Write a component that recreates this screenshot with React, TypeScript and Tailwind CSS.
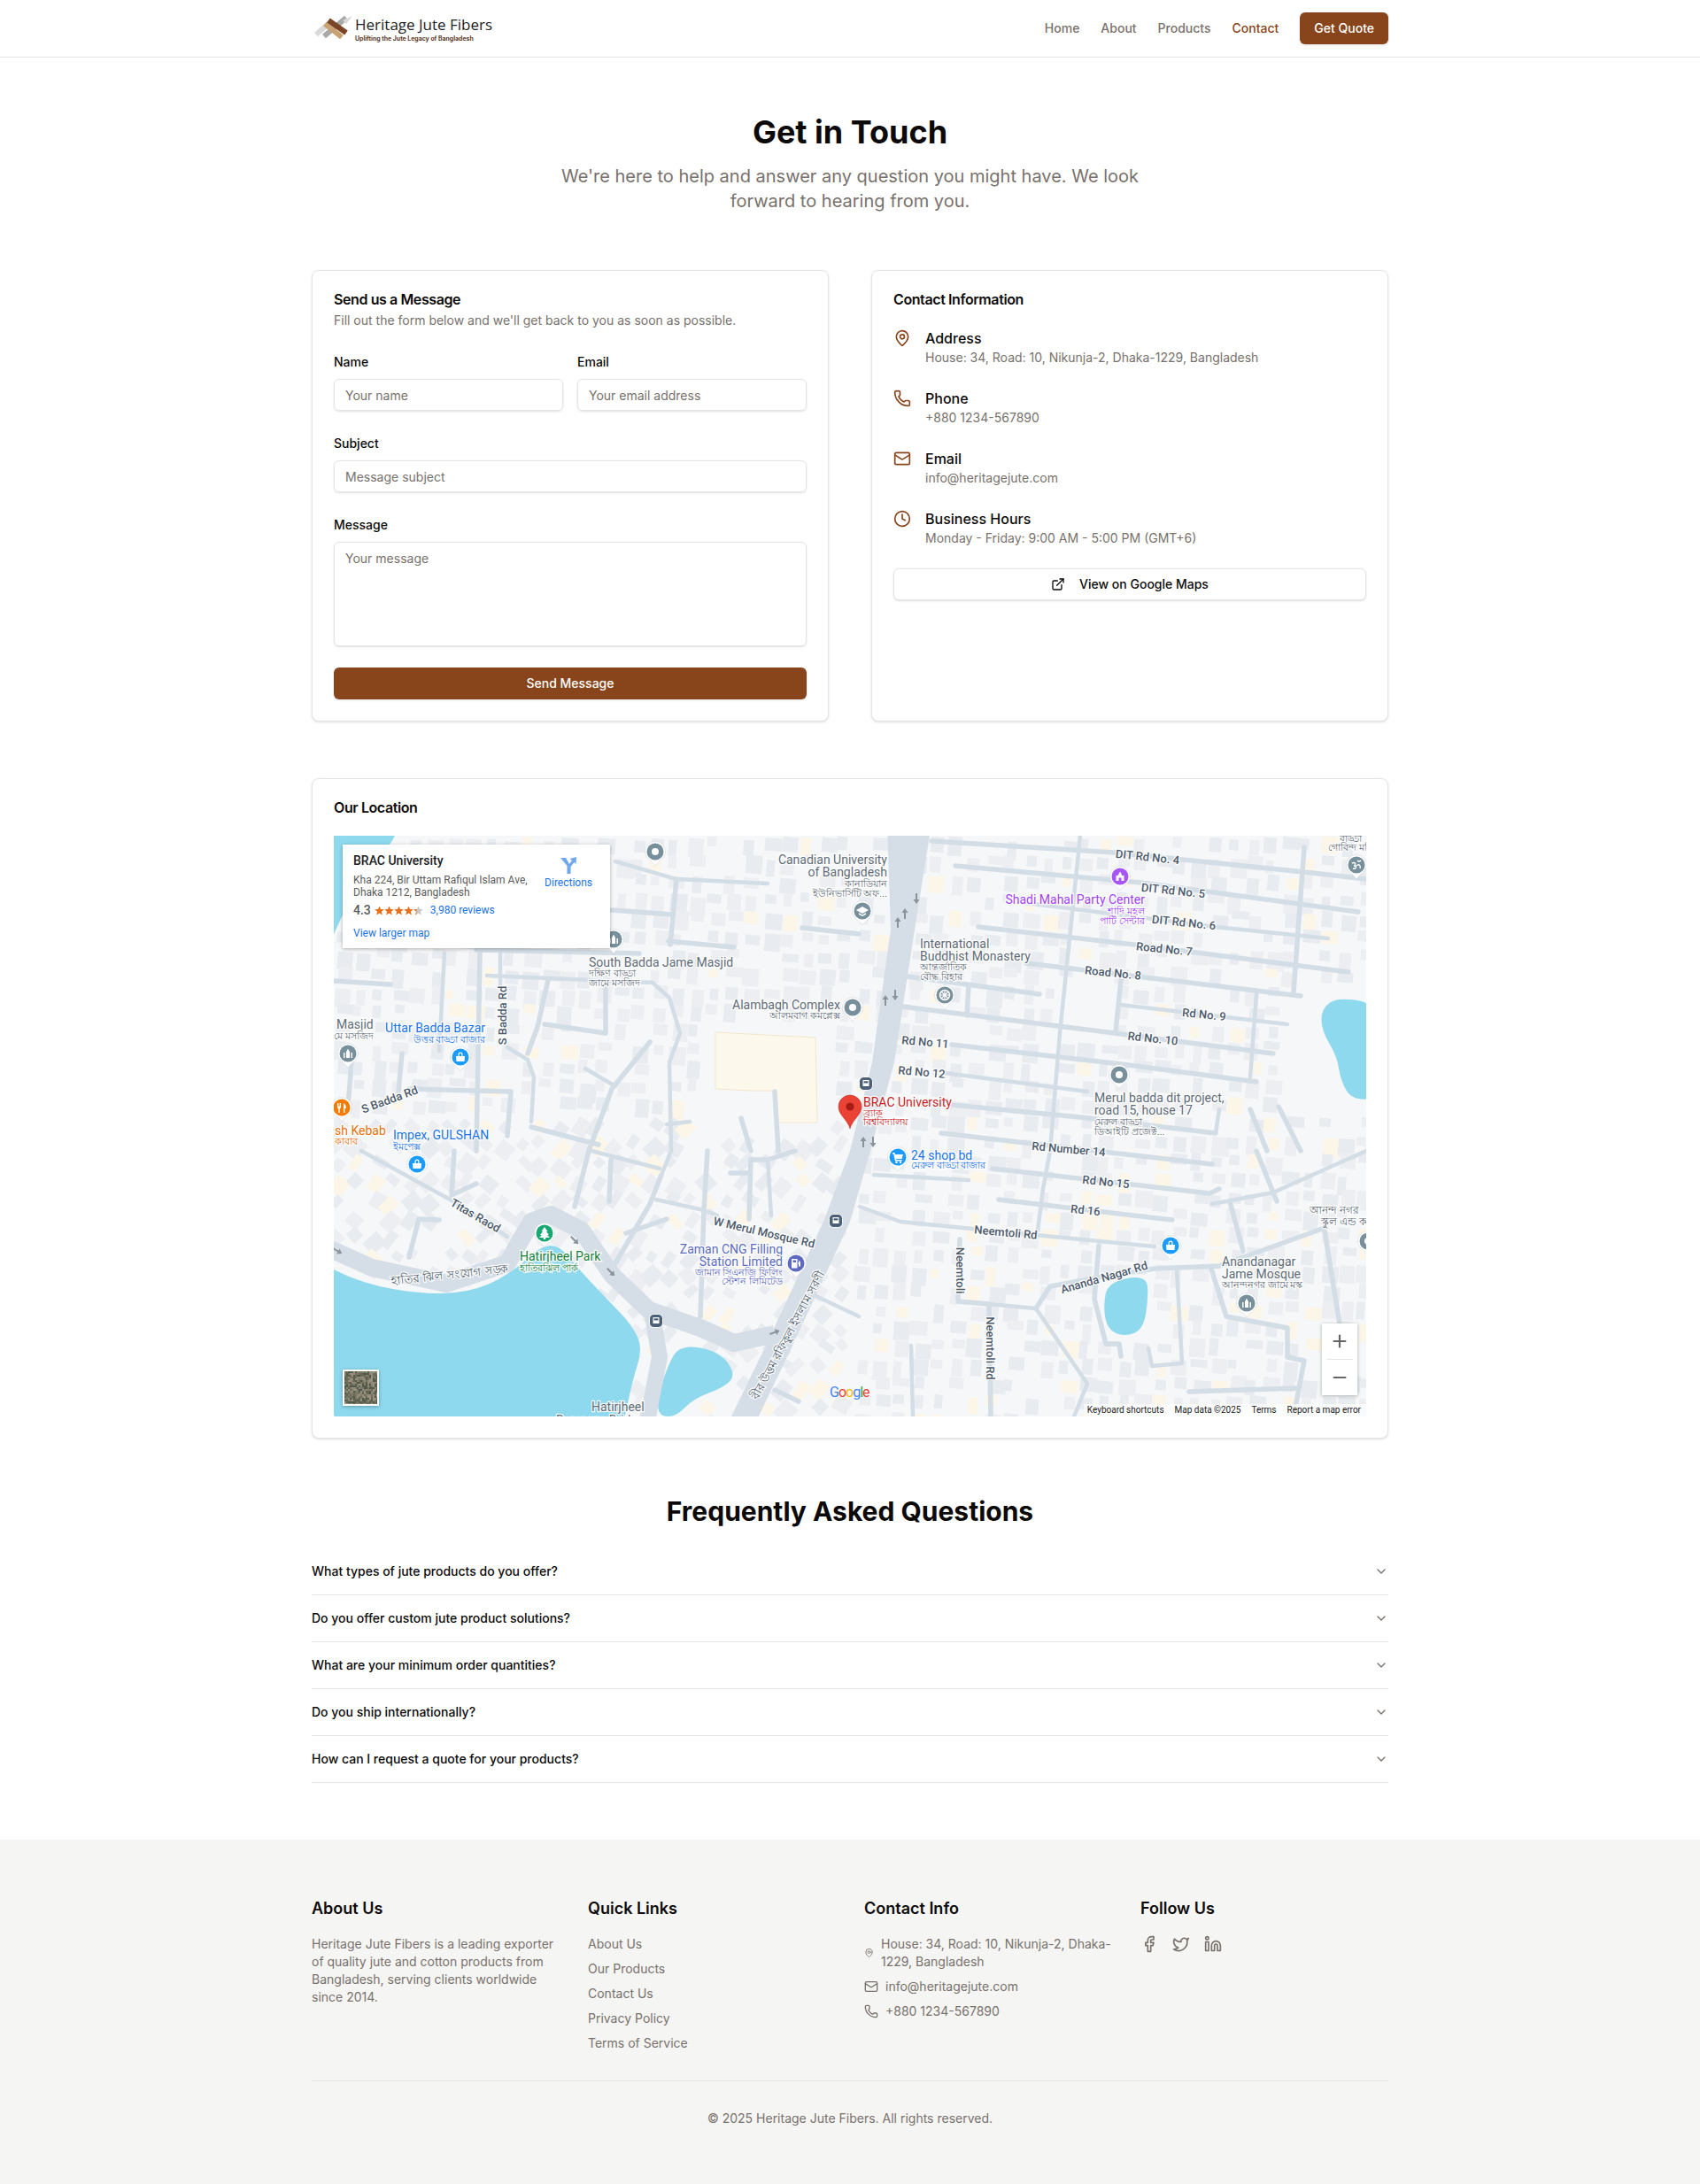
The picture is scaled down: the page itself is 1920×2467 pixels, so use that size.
import { ChevronDown, Clock, ExternalLink, Facebook, Linkedin, Mail, MapPin, Minus, Phone, Plus, Twitter } from 'lucide-react';

const navLinks = ['Home', 'About', 'Products'];
const faqs = [
    'What types of jute products do you offer?',
    'Do you offer custom jute product solutions?',
    'What are your minimum order quantities?',
    'Do you ship internationally?',
    'How can I request a quote for your products?',
];
const quickLinks = ['About Us', 'Our Products', 'Contact Us', 'Privacy Policy', 'Terms of Service'];
const contactRows = [
    { icon: MapPin, title: 'Address', text: 'House: 34, Road: 10, Nikunja-2, Dhaka-1229, Bangladesh' },
    { icon: Phone, title: 'Phone', text: '+880 1234-567890' },
    { icon: Mail, title: 'Email', text: 'info@heritagejute.com' },
    { icon: Clock, title: 'Business Hours', text: 'Monday - Friday: 9:00 AM - 5:00 PM (GMT+6)' },
];

// map drawing uses page pixel coordinates, see the viewBox on the svg
const lakes = [
    [[350, 1420], [408, 1450], [485, 1463], [542, 1457], [584, 1433], [607, 1410], [630, 1405], [653, 1433], [688, 1470], [714, 1497], [726, 1523], [714, 1560], [700, 1630], [350, 1640]],
    [[768, 1518], [814, 1527], [831, 1553], [818, 1567], [783, 1580], [764, 1600], [745, 1600], [742, 1583], [753, 1545]],
    [[1251, 1448], [1295, 1440], [1297, 1467], [1291, 1502], [1270, 1510], [1251, 1502], [1246, 1477]],
    [[1511, 1126], [1560, 1135], [1560, 1240], [1527, 1243], [1514, 1220], [1510, 1193], [1493, 1165], [1492, 1140]],
    [[350, 920], [470, 920], [400, 1000], [350, 1120]],
];
const emptyAreas = [
    [1204, 1108, 1258, 1166],
    [1460, 1125, 1543, 1260],
    [800, 1160, 930, 1270],
];

const smoothPath = (poly: number[][]) => {
    const mid = (a: number[], b: number[]) => `${(a[0] + b[0]) / 2} ${(a[1] + b[1]) / 2}`;
    let d = `M${mid(poly[poly.length - 1], poly[0])}`;
    poly.forEach((p, i) => {
        d += ` Q${p[0]} ${p[1]} ${mid(p, poly[(i + 1) % poly.length])}`;
    });
    return d + ' Z';
};

const inLake = (x: number, y: number) =>
    lakes.some((poly) => {
        let hit = false;
        for (let i = 0, j = poly.length - 1; i < poly.length; j = i++) {
            const [xi, yi] = poly[i];
            const [xj, yj] = poly[j];
            if (yi > y !== yj > y && x < ((xj - xi) * (y - yi)) / (yj - yi) + xi) hit = !hit;
        }
        return hit;
    });

function makeBuildings() {
    let seed = 4711;
    const rnd = () => {
        seed = (seed * 16807) % 2147483647;
        return seed / 2147483647;
    };
    const out: { x: number; y: number; w: number; h: number; fill: string; rot: number }[] = [];
    for (let y = 944; y < 1600; y += 21) {
        for (let x = 377; x < 1543; x += 21) {
            const r = rnd();
            const px = x + rnd() * 7;
            const py = y + rnd() * 7;
            const w = 9 + rnd() * 11;
            const h = 9 + rnd() * 13;
            if (r < 0.2 || inLake(px + w / 2, py + h / 2) || inLake(px, py) || inLake(px + w, py + h)) continue;
            if (emptyAreas.some(([a, b, c, d]) => px + w > a && px < c && py + h > b && py < d)) continue;
            const west = x < 960;
            const beige = r > 0.9;
            out.push({
                x: px,
                y: py,
                w,
                h,
                fill: beige ? '#fbf6e8' : r > 0.55 ? '#e8ebf0' : '#eceef2',
                rot: west && y > 1250 ? 30 + rnd() * 20 : 5,
            });
        }
    }
    return out;
}
const buildings = makeBuildings();

const mainRoad = '1002,930 1052,930 1033,1050 1010,1200 983,1300 960,1380 895,1520 852,1610 821,1610 865,1520 930,1380 960,1300 985,1200 1006,1050';
const wideRoads = [
    { d: 'M360 1405 L420 1432 L504 1450 L573 1427 L600 1380 L622 1372 L657 1390 L691 1440 L733 1480 L791 1500 L829 1517 L875 1507', w: 20 },
    { d: 'M737 1487 L745 1533 L730 1610', w: 18 },
];
const streets = [
    'M1052 950 L1258 963 L1473 985 L1543 993', 'M1079 978 L1289 997 L1534 1030', 'M1159 1020 L1373 1047 L1500 1060',
    'M1105 1047 L1281 1067 L1523 1098', 'M1159 1088 L1469 1125', 'M1266 1135 L1454 1157', 'M1019 1137 L1259 1167 L1438 1190',
    'M1075 1180 L1266 1202 L1419 1222', 'M1067 1212 L1228 1233', 'M1075 1248 L1220 1262 L1373 1280', 'M1063 1280 L1369 1315',
    'M1220 944 L1197 1167 L1186 1300 L1178 1343 L1172 1390', 'M1266 1107 L1260 1165', 'M1473 957 L1461 1120', 'M1419 1123 L1412 1217',
    'M1094 1113 L1092 1147', 'M1025 1103 L1174 1123', 'M987 1327 L1094 1333', 'M1121 1320 L1366 1348 L1377 1343', 'M1128 1355 L1324 1378',
    'M971 1363 L1017 1380 L1098 1388 L1304 1408', 'M1170 1478 L1186 1453 L1258 1440 L1304 1433 L1377 1430 L1496 1387',
    'M1084 1400 L1082 1470 L1117 1473 L1119 1600', 'M1117 1473 L1170 1478 L1228 1563 L1213 1600', 'M1389 1357 L1404 1413',
    'M1368 1433 L1385 1487 L1454 1500 L1454 1533 L1473 1537 L1461 1600', 'M1329 1433 L1335 1540 L1301 1543 L1297 1523',
    'M1241 1407 L1236 1467 L1249 1518 L1264 1518 L1266 1532', 'M1343 1572 L1465 1568', 'M1029 1520 L1031 1600',
    'M1496 1390 L1511 1483 L1515 1507', 'M1419 1300 L1442 1357', 'M1369 1360 L1438 1347 L1543 1300', 'M1444 1250 L1469 1300', 'M1412 1253 L1431 1300',
    'M1377 1253 L1373 1280', 'M377 1108 L441 1112', 'M538 1073 L722 1077', 'M550 1102 L737 1110 L756 1127 L768 1167 L756 1200 L758 1300 L747 1327',
    'M764 993 L757 1067', 'M755 1063 L829 1070', 'M695 973 L764 993 L867 998', 'M691 1028 L760 1033', 'M906 1048 L970 1055',
    'M502 1077 L496 1187', 'M542 1077 L538 1300', 'M454 1190 L450 1233', 'M565 1077 L565 1113', 'M397 1200 L393 1250', 'M462 1230 L577 1233 L573 1283',
    'M573 1183 L596 1197 L603 1217 L600 1267', 'M619 1107 L607 1160 L596 1190', 'M615 1157 L684 1167 L684 1117', 'M661 1207 L695 1227',
    'M734 1177 L691 1230 L665 1300 L649 1363', 'M600 1273 L676 1293', 'M753 1270 L779 1267', 'M875 1233 L879 1300', 'M837 1263 L848 1300',
    'M408 1300 L512 1357 L573 1397', 'M462 1420 L473 1377 L496 1378', 'M513 1300 L510 1350 L538 1337', 'M668 1300 L745 1320', 'M690 1310 L688 1357',
    'M747 1327 L734 1360 L695 1427', 'M741 1355 L795 1367 L810 1373', 'M799 1300 L795 1367 L791 1487', 'M848 1310 L846 1377', 'M867 1310 L871 1373',
    'M898 1300 L867 1310 L848 1310', 'M825 1325 L845 1325', 'M913 1460 L970 1487', 'M875 1570 L902 1583', 'M753 1377 L707 1393',
];

type TextRow = [string, number, number, 'start' | 'end' | 'middle'?, number?];
const labelGroups: { color: string; rows: TextRow[] }[] = [
    {
        color: '#5f6b76',
        rows: [
            ['Canadian University', 1002, 971, 'end'],
            ['of Bangladesh', 1002, 985, 'end'],
            ['কানাডিয়ান', 1002, 998, 'end', 11],
            ['ইউনিভার্সিটি অফ...', 1002, 1009, 'end', 11],
            ['South Badda Jame Masjid', 665, 1087],
            ['দক্ষিণ বাড্ডা', 665, 1099, 'start', 11],
            ['জামে মসজিদ', 665, 1110, 'start', 11],
            ['Alambagh Complex', 949, 1135, 'end'],
            ['আলমবাগ কমপ্লেক্স', 949, 1147, 'end', 11],
            ['International', 1039, 1066],
            ['Buddhist Monastery', 1039, 1080],
            ['আন্তর্জাতিক', 1039, 1092, 'start', 11],
            ['বৌদ্ধ বিহার', 1039, 1103, 'start', 11],
            ['Merul badda dit project,', 1236, 1240],
            ['road 15, house 17', 1236, 1254],
            ['মেরুল বাড্ডা', 1236, 1267, 'start', 11],
            ['ডিআইটি প্রজেক্ট...', 1236, 1278, 'start', 11],
            ['Masjid', 380, 1157],
            ['মে মসজিদ', 377, 1170, 'start', 11],
            ['Anandanagar', 1380, 1425],
            ['Jame Mosque', 1380, 1439],
            ['আনন্দনগর জামে মস্ক', 1380, 1451, 'start', 11],
            ['Hatirjheel', 668, 1589],
            ['Rampura Bridge', 628, 1604],
            ['আনন্দ নগর', 1479, 1367, 'start', 12],
            ['স্কুল এন্ড কলেজ', 1492, 1380, 'start', 12],
            ['বাড্ডা', 1513, 947, 'start', 11],
            ['গোবিন্দ মন্দির', 1500, 957, 'start', 11],
        ],
    },
    {
        color: '#1a73e8',
        rows: [
            ['Uttar Badda Bazar', 548, 1161, 'end'],
            ['উত্তর বাড্ডা বাজার', 548, 1174, 'end', 11],
            ['Impex, GULSHAN', 444, 1282],
            ['ইমপেক্স', 444, 1295, 'start', 11],
            ['24 shop bd', 1029, 1305],
            ['মেরুল বাড্ডা বাজার', 1029, 1316, 'start', 11],
        ],
    },
    { color: '#e8710a', rows: [['sh Kebab', 378, 1277], ['কাবাব', 378, 1289, 'start', 11]] },
    { color: '#188038', rows: [['Hatirjheel Park', 587, 1419], ['হাতিরঝিল পার্ক', 587, 1432, 'start', 11]] },
    {
        color: '#a142f4',
        rows: [
            ['Shadi Mahal Party Center', 1293, 1016, 'end'],
            ['শাদি মহল', 1293, 1029, 'end', 11],
            ['পার্টি সেন্টার', 1293, 1040, 'end', 11],
        ],
    },
    {
        color: '#5c6bc0',
        rows: [
            ['Zaman CNG Filling', 884, 1411, 'end'],
            ['Station Limited', 884, 1425, 'end'],
            ['জামান সিএনজি ফিলিং', 884, 1437, 'end', 11],
            ['স্টেশন লিমিটেড', 884, 1447, 'end', 11],
        ],
    },
    { color: '#c5221f', rows: [['BRAC University', 975, 1245], ['ব্র্যাক', 975, 1257, 'start', 11], ['বিশ্ববিদ্যালয়', 975, 1267, 'start', 11]] },
];

const roadLabels: [string, number, number, number][] = [
    ['DIT Rd No. 4', 1296, 968, 6], ['DIT Rd No. 5', 1325, 1006, 6], ['DIT Rd No. 6', 1337, 1042, 6], ['Road No. 7', 1315, 1072, 6],
    ['Road No. 8', 1257, 1099, 6], ['Rd No. 9', 1360, 1146, 6], ['Rd No. 10', 1302, 1173, 6], ['Rd No 11', 1045, 1177, 5],
    ['Rd No 12', 1041, 1211, 5], ['Rd Number 14', 1207, 1298, 5], ['Rd No 15', 1249, 1335, 6], ['Rd 16', 1226, 1367, 6],
    ['Neemtoli Rd', 1136, 1392, 5], ['Neemtoli', 1084, 1435, 90], ['Neemtoli Rd', 1118, 1523, 90], ['Ananda Nagar Rd', 1247, 1443, -16],
    ['W Merul Mosque Rd', 863, 1392, 13], ['Titas Raod', 537, 1373, 30], ['S Badda Rd', 440, 1242, -20], ['S Badda Rd', 567, 1147, -90],
    ['হাতির ঝিল সংযোগ সড়ক', 508, 1440, -6], ['বীর উত্তম রফিকুল ইসলাম সরণী', 890, 1508, -62],
];

const arrows: [number, number, number][] = [
    [1035, 1015, 180], [1022, 1032, 0], [1014, 1042, 0], [1000, 1130, 0], [1011, 1124, 180], [975, 1290, 0], [986, 1290, 180],
    [649, 1401, 135], [690, 1437, 135], [381, 1413, 120], [875, 1505, 70],
];

const PIN_BLUE = '#1a9bfd';
const PIN_GREY = '#78909c';
type Glyph = 'dot' | 'mosque' | 'shop' | 'cap' | 'wheel' | 'home' | 'om' | 'food' | 'tree' | 'gas' | 'cart';
const pins: [number, number, string, Glyph][] = [
    [740, 962, PIN_GREY, 'dot'], [963, 1138, PIN_GREY, 'dot'], [974, 1029, PIN_GREY, 'cap'], [1067, 1124, PIN_GREY, 'wheel'],
    [1265, 990, '#a855f7', 'home'], [1532, 977, PIN_GREY, 'om'], [1264, 1214, PIN_GREY, 'dot'], [693, 1061, PIN_GREY, 'mosque'],
    [393, 1190, PIN_GREY, 'mosque'], [520, 1194, PIN_BLUE, 'shop'], [386, 1251, '#f57c00', 'food'], [471, 1315, PIN_BLUE, 'shop'],
    [615, 1393, '#16a870', 'tree'], [899, 1427, '#5c6bc0', 'gas'], [1014, 1307, PIN_BLUE, 'cart'], [1322, 1407, PIN_BLUE, 'shop'],
    [1408, 1472, PIN_GREY, 'mosque'], [1545, 1402, PIN_GREY, 'dot'],
];
const transit: [number, number][] = [[978, 1224], [944, 1379], [741, 1492]];

function PinGlyph({ kind }: { kind: Glyph }) {
    switch (kind) {
        case 'dot':
            return <circle r="4" fill="#fff" />;
        case 'mosque':
            return <path d="M-5 5 V-1 H-3.5 V5 Z M-2 5 V-1.5 A2 2 0 0 1 2 -1.5 V5 Z M3.5 5 V-1 H5 V5 Z M-1 -4.5 H1 V-3 H-1 Z" fill="#fff" />;
        case 'shop':
            return <path d="M-5 -1 H5 L4.5 5 H-4.5 Z M-2.5 -1 V-3 A2.5 2.5 0 0 1 2.5 -3 V-1 H1.3 V-3 A1.3 1.3 0 0 0 -1.3 -3 V-1 Z" fill="#fff" />;
        case 'cap':
            return <path d="M0 -5 L7 -1 L0 3 L-7 -1 Z M-4 2 L0 4.5 L4 2 V4 L0 6 L-4 4 Z" fill="#fff" />;
        case 'wheel':
            return (
                <g fill="none" stroke="#fff">
                    <circle r="5.5" strokeWidth="1.5" />
                    <path d="M0 -6 V6 M-6 0 H6 M-4 -4 L4 4 M-4 4 L4 -4" strokeWidth="1.2" />
                </g>
            );
        case 'home':
            return <path d="M-4.5 5 V-1 L-2.5 -1 L0 -5.5 L2.5 -1 L4.5 -1 V5 H1.5 V1.5 H-1.5 V5 Z" fill="#fff" />;
        case 'om':
            return <path d="M-5 -2 C-1 -4 0 0 -3 1 C1 1 0 5 -4 4 M0 1 C3 -2 5 1 4 4 M1 -5 C3 -3 4 -4 5 -5" fill="none" stroke="#fff" strokeWidth="1.4" />;
        case 'food':
            return <path d="M-5 -5 V-1 Q-5 1 -3.7 1.5 V6 H-2.3 V1.5 Q-1 1 -1 -1 V-5 H-2 V-1.5 H-2.6 V-5 H-3.4 V-1.5 H-4 V-5 Z M2 -5 Q5 -3 5 1 H3.4 V6 H2 Z" fill="#fff" />;
        case 'tree':
            return <path d="M0 -7 L3.5 -2 H2 L5 2 H3 L6 5 H1.2 V7 H-1.2 V5 H-6 L-3 2 H-5 L-2 -2 H-3.5 Z" fill="#fff" />;
        case 'gas':
            return <path d="M-5 -5 H1.5 V5.5 H-5 Z M-3.5 -3.5 V-1 H0 V-3.5 Z M2.5 -4 L5 -1.5 V3.5 H3 V1 H2.5 V-1 H3.5 Z" fill="#fff" fillRule="evenodd" />;
        case 'cart':
            return <path d="M-6 -5 H-3.5 L-3 -3 H6 L4.5 2 H-2 L-1.6 3 H4.5 V4.4 H-3 L-4.8 -3.6 H-6 Z M-1.5 4.8 A1.2 1.2 0 1 0 -1.49 4.8 Z M3 4.8 A1.2 1.2 0 1 0 3.01 4.8 Z" fill="#fff" />;
    }
}

function MapDrawing() {
    return (
        <svg viewBox="377 944 1166 656" className="block h-full w-full [font-family:Roboto,sans-serif]">
            <rect x="377" y="944" width="1166" height="656" fill="#f6f7f8" />
            {buildings.map((b, i) => (
                <rect key={i} x={b.x} y={b.y} width={b.w} height={b.h} fill={b.fill} transform={`rotate(${b.rot} ${b.x} ${b.y})`} />
            ))}
            <path d="M808 1166 L921 1172 L923 1268 L878 1268 L877 1232 L848 1232 L808 1230 Z" fill="#fdf8ec" stroke="#f3e6cf" />
            {streets.map((d, i) => (
                <path key={i} d={d} fill="none" stroke="#d3dde6" strokeWidth={i % 3 === 2 ? 4.5 : 5.5} strokeLinecap="round" strokeLinejoin="round" />
            ))}
            {lakes.map((poly, i) => (
                <path key={i} d={smoothPath(poly)} fill="#8ed9ee" />
            ))}
            <polygon points={mainRoad} fill="#d5dee6" />
            {wideRoads.map((r, i) => (
                <path key={i} d={r.d} fill="none" stroke="#d5dee6" strokeWidth={r.w} strokeLinejoin="round" />
            ))}
            {arrows.map(([x, y, rot], i) => (
                <path key={i} d="M0 -6 L3.5 -1 H1 V6 H-1 V-1 H-3.5 Z" fill="#8a939b" transform={`translate(${x} ${y}) rotate(${rot})`} />
            ))}
            <g stroke="#fff" strokeOpacity="0.9" strokeWidth="2.5" style={{ paintOrder: 'stroke' }} dominantBaseline="central">
                {labelGroups.map((group) =>
                    group.rows.map(([text, x, y, anchor, size], i) => (
                        <text key={`${text}${i}`} x={x} y={y} fill={group.color} fontSize={size ?? 14} textAnchor={anchor ?? 'start'}>
                            {text}
                        </text>
                    )),
                )}
                {roadLabels.map(([text, x, y, rot], i) => (
                    <text key={i} x={x} y={y} fill="#4d5a6b" fontSize="13" fontWeight="500" textAnchor="middle" transform={`rotate(${rot} ${x} ${y})`}>
                        {text}
                    </text>
                ))}
            </g>
            {pins.map(([x, y, color, kind], i) => (
                <g key={i} transform={`translate(${x} ${y})`}>
                    <path d="M-11.5 0 A11.5 11.5 0 1 1 11.5 0 C11.5 7 4 10 0 16 C-4 10 -11.5 7 -11.5 0 Z" fill="#fff" stroke="#c9ced4" strokeWidth="0.5" />
                    <circle r="9.5" fill={color} />
                    <PinGlyph kind={kind} />
                </g>
            ))}
            {transit.map(([x, y], i) => (
                <g key={i} transform={`translate(${x} ${y})`}>
                    <rect x="-7.5" y="-7.5" width="15" height="15" rx="5" fill="#4b6076" stroke="#fff" />
                    <path d="M-3.5 -4 H3.5 V3 H-3.5 Z M-2.4 -2.8 V-0.4 H2.4 V-2.8 Z" fill="#fff" fillRule="evenodd" />
                </g>
            ))}
            <g transform="translate(960 1250)">
                <path d="M-13 0 A13 13 0 1 1 13 0 C13 10 3 14 0 25 C-3 14 -13 10 -13 0 Z" fill="#ea4335" stroke="#c5221f" strokeWidth="0.5" />
                <circle r="4.6" fill="#a51c15" />
            </g>
        </svg>
    );
}

const satTiles = (() => {
    let seed = 99;
    const colors = ['#75735f', '#6a6a58', '#8f8b78', '#5a5d4c', '#807c68', '#4f5a4a', '#9a927e'];
    const out: { x: number; y: number; fill: string }[] = [];
    for (let y = 0; y < 37; y += 2) {
        for (let x = 0; x < 37; x += 2) {
            seed = (seed * 16807) % 2147483647;
            out.push({ x, y, fill: colors[seed % colors.length] });
        }
    }
    return out;
})();

function SatelliteThumb() {
    return (
        <svg viewBox="0 0 37 37" className="block h-full w-full">
            {satTiles.map((t, i) => (
                <rect key={i} x={t.x} y={t.y} width="2" height="2" fill={t.fill} />
            ))}
        </svg>
    );
}

function Stars() {
    const star = 'M5.5 0.5 L7 4 L10.8 4.3 L7.9 6.8 L8.8 10.5 L5.5 8.5 L2.2 10.5 L3.1 6.8 L0.2 4.3 L4 4 Z';
    return (
        <svg width="55" height="11" viewBox="0 0 55 11">
            <defs>
                <clipPath id="half-star">
                    <rect x="44" y="0" width="3.5" height="11" />
                </clipPath>
            </defs>
            {[0, 11, 22, 33].map((x) => (
                <path key={x} d={star} transform={`translate(${x} 0)`} fill="#e7711b" />
            ))}
            <path d={star} transform="translate(44 0)" fill="#c8c8c8" />
            <g clipPath="url(#half-star)">
                <path d={star} transform="translate(44 0)" fill="#e7711b" />
            </g>
        </svg>
    );
}

function MapSection() {
    return (
        <div className="relative h-[656px] overflow-hidden [font-family:Roboto,sans-serif]">
            <MapDrawing />
            {/* place card */}
            <div className="absolute left-[10px] top-[10px] flex h-[117px] w-[302px] justify-between bg-white pl-3 pr-5 pt-[9px] shadow-[0_1px_4px_rgba(0,0,0,0.3)]">
                <div>
                    <div className="text-[14px] font-medium leading-[18px] text-[#202124]">BRAC University</div>
                    <div className="mt-[6px] w-[205px] text-[12px] leading-[14px] text-[#5b5b5b]">
                        Kha 224, Bir Uttam Rafiqul Islam Ave, Dhaka 1212, Bangladesh
                    </div>
                    <div className="mt-1 flex h-[18px] items-center text-[12px]">
                        <span className="mr-1 text-[14px] font-medium text-[#5b5b5b]">4.3</span>
                        <Stars />
                        <span className="ml-2 text-[#1a73e8]">3,980 reviews</span>
                    </div>
                    <div className="mt-[10px] text-[12px] leading-[14px] text-[#1a73e8]">View larger map</div>
                </div>
                <div className="flex flex-col items-center pt-1">
                    <svg width="20" height="20" viewBox="0 0 20 20">
                        <path d="M1 2 L7 2 L11 9 L14 5 L11.5 3 L19 1 L18.5 9 L16.5 7 L12.5 12 V20 H8.5 V11 Z" fill="#6fa8ec" />
                    </svg>
                    <span className="mt-[3px] text-[12px] leading-[14px] text-[#1a73e8]">Directions</span>
                </div>
            </div>
            {/* satellite toggle */}
            <div className="absolute bottom-[12px] left-[10px] h-[41px] w-[41px] border-2 border-white shadow-[0_1px_4px_rgba(0,0,0,0.3)]">
                <SatelliteThumb />
            </div>
            {/* google wordmark */}
            <div className="absolute bottom-[18px] left-[560px] text-[16px] leading-[18px] tracking-[-1px]">
                <span className="text-[#4285f4]">G</span>
                <span className="text-[#ea4335]">o</span>
                <span className="text-[#fbbc05]">o</span>
                <span className="text-[#4285f4]">g</span>
                <span className="text-[#34a853]">l</span>
                <span className="text-[#ea4335]">e</span>
            </div>
            {/* zoom buttons */}
            <div className="absolute bottom-[24px] right-[10px] flex h-[81px] w-[40px] flex-col items-center bg-white shadow-[0_1px_4px_rgba(0,0,0,0.3)]">
                <div className="flex h-10 w-full items-center justify-center text-[#666]">
                    <Plus size={22} strokeWidth={2.4} />
                </div>
                <div className="h-px w-[30px] bg-[#e6e6e6]" />
                <div className="flex h-10 w-full items-center justify-center text-[#666]">
                    <Minus size={22} strokeWidth={2.4} />
                </div>
            </div>
            {/* attribution */}
            <div className="absolute bottom-0 right-0 flex h-[14px] items-center gap-3 bg-white/70 pl-1 pr-[6px] text-[10px] leading-none text-[#222]">
                <span>Keyboard shortcuts</span>
                <span>Map data ©2025</span>
                <span>Terms</span>
                <span>Report a map error</span>
            </div>
        </div>
    );
}

function LogoMark() {
    return (
        <svg width="44" height="28" viewBox="0 0 44 28" className="shrink-0">
            <g strokeWidth="6" fill="none">
                <path d="M2 21 L18 7" stroke="#d9d9d9" />
                <path d="M11 23 L36 2" stroke="#a9a9a9" />
                <path d="M12 9 L31 24" stroke="#c9a271" />
                <path d="M16 5 L36 19" stroke="#7a4526" />
            </g>
            <path d="M32 5 L43 0 L36 9 Z" fill="#d9d9d9" />
        </svg>
    );
}

function Field({ label, placeholder }: { label: string; placeholder: string }) {
    return (
        <div className="min-w-0 flex-1">
            <label className="block text-sm font-medium leading-[14px] text-[#0c0a09]">{label}</label>
            <input
                placeholder={placeholder}
                className="mt-3 block h-9 w-full rounded-md border border-[#e7e5e4] bg-transparent px-3 text-sm shadow-sm placeholder:text-[#78716c]"
            />
        </div>
    );
}

export default function App() {
    return (
        <div className="min-h-screen bg-white text-[#0c0a09] [font-family:Inter,sans-serif]">
            <header className="border-b border-[#e7e5e4] bg-white">
                <div className="mx-auto flex h-16 max-w-[1216px] items-center justify-between">
                    <div className="flex items-center pl-[3px]">
                        <LogoMark />
                        <div className="ml-[2px] flex flex-col">
                            <span className="text-[17px] leading-[22px] text-[#222] [font-family:'Open_Sans',sans-serif]">Heritage Jute Fibers</span>
                            <span className="text-[6.9px] font-bold leading-[9px] text-[#5b3a29]">Uplifting the Jute Legacy of Bangladesh</span>
                        </div>
                    </div>
                    <nav className="flex items-center gap-6 text-sm font-medium text-[#78716c]">
                        {navLinks.map((link) => (
                            <a key={link}>{link}</a>
                        ))}
                        <a className="text-[#88441a]">Contact</a>
                        <button className="h-9 rounded-md bg-[#88441a] px-4 text-sm font-medium text-white shadow">Get Quote</button>
                    </nav>
                </div>
            </header>

            <main className="mx-auto max-w-[1216px] pt-16">
                <div className="mb-16 text-center">
                    <h1 className="text-4xl font-bold text-[#0c0a09]">Get in Touch</h1>
                    <p className="mx-auto mt-4 max-w-2xl text-xl text-[#78716c]">
                        We're here to help and answer any question you might have. We look forward to hearing from you.
                    </p>
                </div>

                <div className="mb-16 grid grid-cols-2 gap-12">
                    <div className="rounded-lg border border-[#e7e5e4] bg-white p-6 shadow-sm">
                        <h2 className="text-base font-semibold leading-4 tracking-tight">Send us a Message</h2>
                        <p className="mt-1.5 text-sm text-[#78716c]">Fill out the form below and we'll get back to you as soon as possible.</p>
                        <form className="mt-6 pt-[6px]">
                            <div className="flex gap-4">
                                <Field label="Name" placeholder="Your name" />
                                <Field label="Email" placeholder="Your email address" />
                            </div>
                            <div className="mt-[30px]">
                                <Field label="Subject" placeholder="Message subject" />
                            </div>
                            <div className="mt-[30px]">
                                <label className="block text-sm font-medium leading-[14px]">Message</label>
                                <textarea
                                    placeholder="Your message"
                                    className="mt-3 block h-[118px] w-full resize-none rounded-md border border-[#e7e5e4] bg-transparent px-3 py-2 text-sm shadow-sm placeholder:text-[#78716c]"
                                />
                            </div>
                            <button type="button" className="mt-6 h-9 w-full rounded-md bg-[#88441a] text-sm font-medium text-white shadow">
                                Send Message
                            </button>
                        </form>
                    </div>

                    <div className="rounded-lg border border-[#e7e5e4] bg-white p-6 shadow-sm">
                        <h2 className="text-base font-semibold leading-4 tracking-tight">Contact Information</h2>
                        <div className="mt-6 space-y-6">
                            {contactRows.map((row) => (
                                <div key={row.title} className="flex gap-4">
                                    <row.icon size={20} className="mt-0.5 shrink-0 text-[#88441a]" />
                                    <div>
                                        <div className="font-medium leading-6">{row.title}</div>
                                        <div className="text-sm text-[#78716c]">{row.text}</div>
                                    </div>
                                </div>
                            ))}
                            <button className="flex h-9 w-full items-center justify-center gap-4 rounded-md border border-[#e7e5e4] bg-white text-sm font-medium shadow-sm">
                                <ExternalLink size={16} />
                                View on Google Maps
                            </button>
                        </div>
                    </div>
                </div>

                <div className="mb-16 rounded-lg border border-[#e7e5e4] bg-white p-6 shadow-sm">
                    <h2 className="mb-6 text-base font-semibold leading-4 tracking-tight">Our Location</h2>
                    <MapSection />
                </div>

                <h2 className="mb-6 text-center text-3xl font-bold">Frequently Asked Questions</h2>
                <div className="mb-16">
                    {faqs.map((q) => (
                        <div key={q} className="flex items-center justify-between border-b border-[#e7e5e4] py-4 text-sm font-medium">
                            <span>{q}</span>
                            <ChevronDown size={16} className="text-[#78716c]" />
                        </div>
                    ))}
                </div>
            </main>

            <footer className="bg-[#f5f5f4] py-16">
                <div className="mx-auto max-w-[1216px]">
                    <div className="grid grid-cols-4 gap-8">
                        <div>
                            <h3 className="mb-4 text-lg font-semibold">About Us</h3>
                            <p className="text-sm text-[#78716c]">
                                Heritage Jute Fibers is a leading exporter of quality jute and cotton products from Bangladesh, serving clients worldwide since 2014.
                            </p>
                        </div>
                        <div>
                            <h3 className="mb-4 text-lg font-semibold">Quick Links</h3>
                            <ul className="space-y-2 text-sm text-[#78716c]">
                                {quickLinks.map((link) => (
                                    <li key={link}>{link}</li>
                                ))}
                            </ul>
                        </div>
                        <div>
                            <h3 className="mb-4 text-lg font-semibold">Contact Info</h3>
                            <ul className="space-y-2 text-sm text-[#78716c]">
                                <li className="flex items-center gap-2">
                                    <MapPin className="w-[11px] shrink-0" size={16} />
                                    <span>House: 34, Road: 10, Nikunja-2, Dhaka-1229, Bangladesh</span>
                                </li>
                                <li className="flex items-center gap-2">
                                    <Mail size={16} />
                                    <span>info@heritagejute.com</span>
                                </li>
                                <li className="flex items-center gap-2">
                                    <Phone size={16} />
                                    <span>+880 1234-567890</span>
                                </li>
                            </ul>
                        </div>
                        <div>
                            <h3 className="mb-4 text-lg font-semibold">Follow Us</h3>
                            <div className="flex gap-4 text-[#78716c]">
                                <Facebook size={20} />
                                <Twitter size={20} />
                                <Linkedin size={20} />
                            </div>
                        </div>
                    </div>
                    <div className="mt-8 border-t border-[#e7e5e4] pt-8 text-center text-sm text-[#78716c]">
                        © 2025 Heritage Jute Fibers. All rights reserved.
                    </div>
                </div>
            </footer>
        </div>
    );
}
